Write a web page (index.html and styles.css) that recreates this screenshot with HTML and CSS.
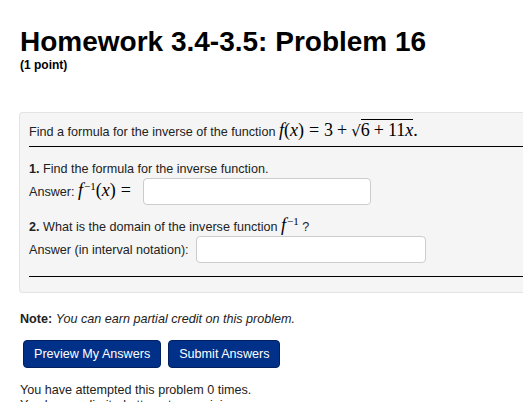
FILE: index.html
```html
<!DOCTYPE html>
<html>
<head>
<meta charset="utf-8">
<link rel="stylesheet" href="styles.css">
</head>
<body>
<div class="page">
  <h1 class="title">Homework 3.4-3.5: Problem 16</h1>
  <div class="points">(1 point)</div>

  <div class="well">
    <div class="statement">Find a formula for the inverse of the function <span class="math"><i>f</i>(<i>x</i>)<span class="op eq">=</span>3<span class="op">+</span><span class="sqrt"><span class="rad">√</span><span class="under">6<span class="op">+</span>11<i>x</i></span></span>.</span></div>
    <div class="rule"></div>
    <div class="part">
      <div class="q"><b>1.</b> Find the formula for the inverse function.</div>
      <div class="ans-row">
        <span>Answer: <span class="math"><i>f</i><sup>−1</sup>(<i>x</i>)<span class="op eq">=</span></span></span>
        <span class="input in1"></span>
      </div>
    </div>
    <div class="part">
      <div class="q"><b>2.</b> What is the domain of the inverse function <span class="math"><i>f</i><sup>−1</sup></span> ?</div>
      <div class="ans-row">
        <span>Answer (in interval notation):</span>
        <span class="input in2"></span>
      </div>
    </div>
    <div class="rule bottom"></div>
  </div>

  <div class="note"><b>Note:</b> <i>You can earn partial credit on this problem.</i></div>
  <div class="buttons">
    <span class="btn">Preview My Answers</span>
    <span class="btn">Submit Answers</span>
  </div>
  <div class="attempts">You have attempted this problem 0 times.</div>
  <div class="attempts">You have unlimited attempts remaining.</div>
</div>
</body>
</html>
```

FILE: styles.css
```css
html, body {
  margin: 0;
  padding: 0;
  background: #fff;
}
body {
  font-family: "Liberation Sans", Arial, sans-serif;
  font-size: 12.6px;
  color: #222;
  overflow: hidden;
  height: 402px;
}
.page {
  padding: 0 0 0 20px;
}
.title {
  margin: 0;
  padding-top: 26px;
  font-size: 28px;
  line-height: 32px;
  font-weight: bold;
  color: #000;
}
.points {
  font-weight: bold;
  font-size: 12px;
  line-height: 14px;
  color: #000;
}
.well {
  margin: 40px 0 0 -1px;
  background: #f5f5f5;
  border: 1px solid #e3e3e3;
  border-right: none;
  border-radius: 4px 0 0 4px;
  padding: 9px 0 15px 9px;
}
.statement {
  height: 20px;
  line-height: 20px;
}
.math {
  font-family: "Liberation Serif", "DejaVu Serif", serif;
  font-size: 18px;
  line-height: 10px;
  color: #000;
}
.math sup {
  font-size: 11px;
  vertical-align: 6px;
  line-height: 0;
  margin-left: 1px;
}
.op {
  margin: 0 4px;
}
.op.eq {
  margin: 0 5px;
}
.sqrt {
  display: inline-block;
  line-height: 16px;
  height: 16px;
}
.rad {
  font-family: "DejaVu Serif", serif;
  font-size: 15px;
}
.under {
  border-top: 1px solid #000;
}
.rule {
  height: 1px;
  background: #000;
  margin: 4px 0 13px 0;
}
.rule.bottom {
  margin: 0;
}
.part {
  margin-bottom: 13px;
}
.q {
  height: 18px;
  line-height: 18px;
}
.ans-row {
  display: flex;
  align-items: center;
  gap: 7px;
  height: 27px;
}
.input {
  display: inline-block;
  height: 25px;
  background: #fff;
  border: 1px solid #ccc;
  border-radius: 4px;
}
.in1 { width: 226px; }
.in2 { width: 228px; }
.note {
  margin-top: 19px;
  line-height: 14px;
  color: #222;
}
.buttons {
  display: flex;
  gap: 7px;
  margin: 14px 0 0 3px;
}
.btn {
  display: inline-block;
  background: #003087;
  color: #fff;
  border: 1px solid #002060;
  border-radius: 4px;
  height: 26px;
  line-height: 26px;
  padding: 0 10px;
}
.attempts {
  margin-top: 15px;
  line-height: 14px;
}
.attempts + .attempts {
  margin-top: 1px;
}
```
